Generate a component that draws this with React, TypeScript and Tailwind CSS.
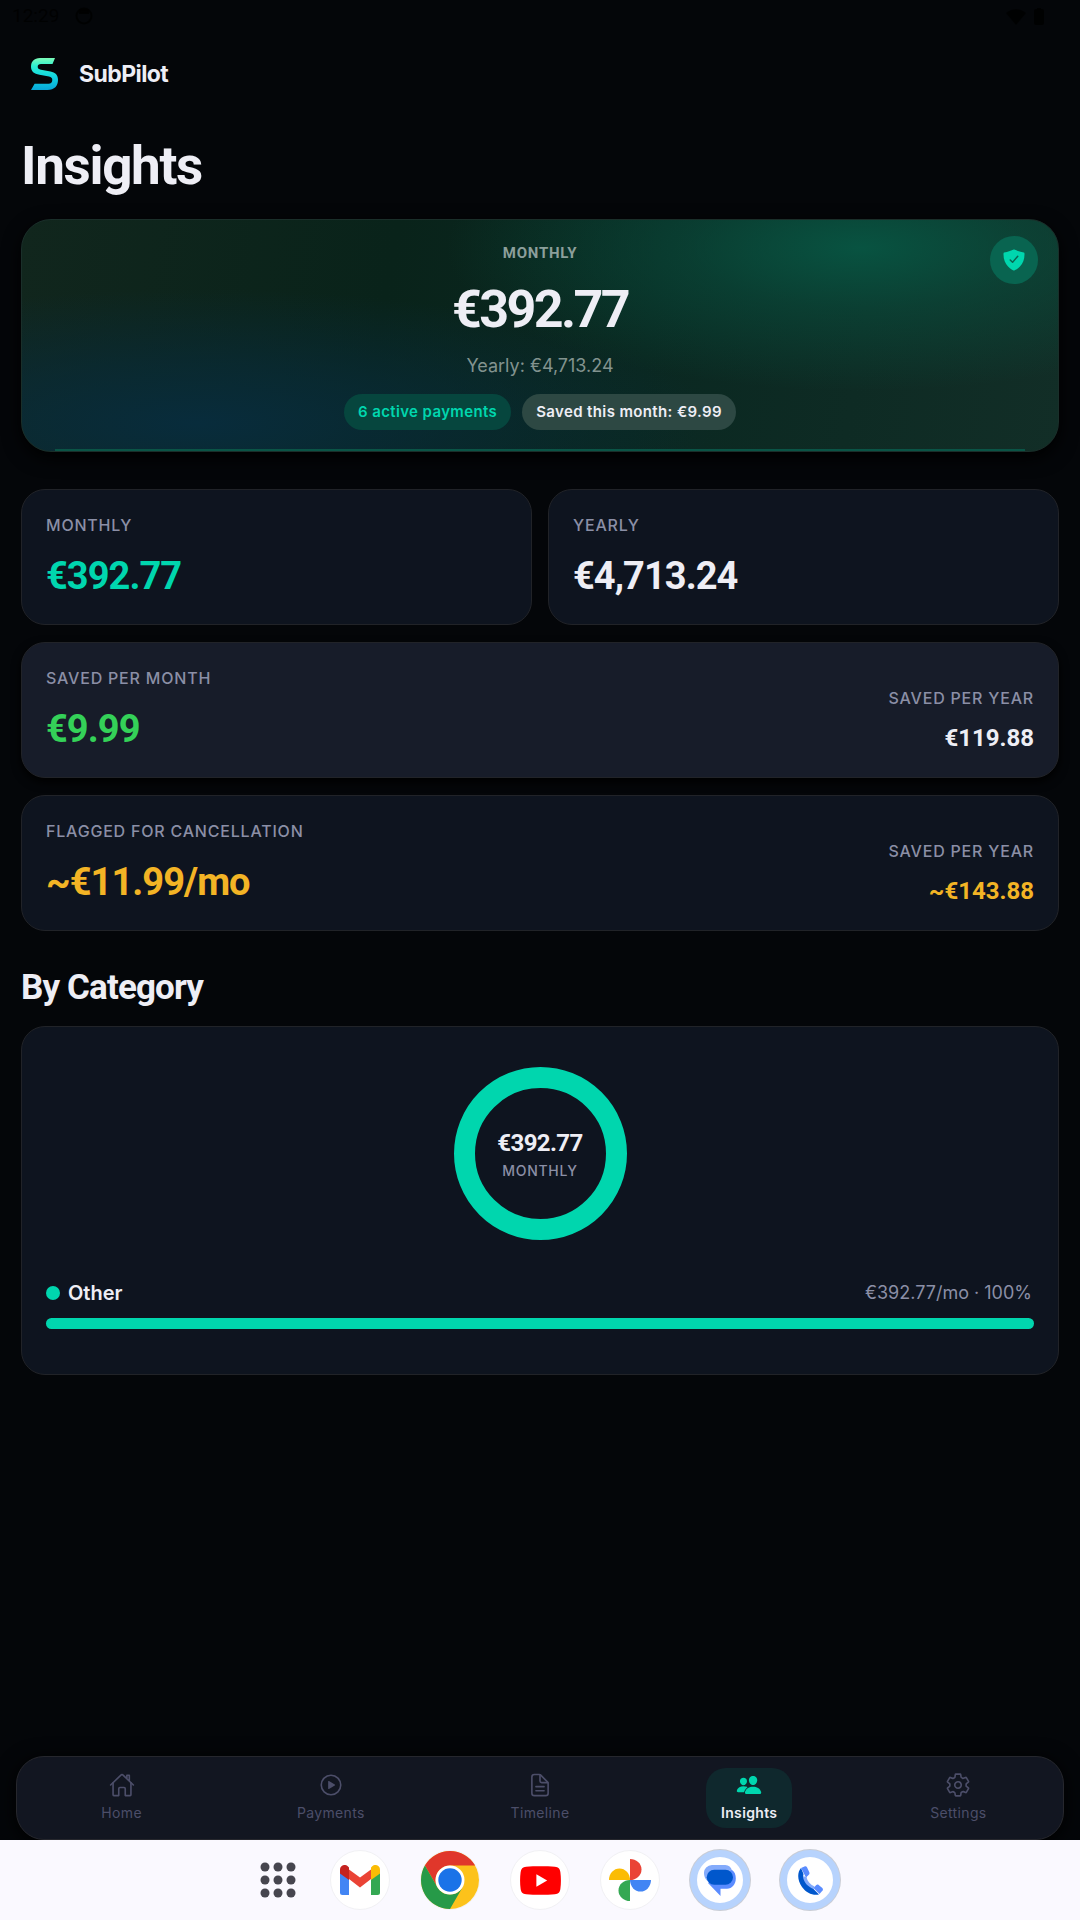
import type { ReactNode } from 'react'
import {
  IoDocumentTextOutline,
  IoHomeOutline,
  IoPeople,
  IoPlayCircleOutline,
  IoSettingsOutline,
  IoShieldCheckmark,
} from 'react-icons/io5'

const TABS = [
  { label: 'Home', Icon: IoHomeOutline },
  { label: 'Payments', Icon: IoPlayCircleOutline },
  { label: 'Timeline', Icon: IoDocumentTextOutline },
  { label: 'Insights', Icon: IoPeople },
  { label: 'Settings', Icon: IoSettingsOutline },
]

const CATEGORIES = [{ name: 'Other', amount: '€392.77/mo', percent: 100 }]

function StatusBar() {
  return (
    <div className="flex h-8 items-center justify-between pl-3 pr-9 text-black/80">
      <div className="flex items-center gap-4">
        <span className="font-['Roboto',sans-serif] text-[19px] leading-6">12:29</span>
        <svg viewBox="0 0 18 18" className="size-[18px]" fill="none" stroke="currentColor" strokeWidth="2">
          <circle cx="9" cy="9" r="7.5" />
          <path d="M5 3h8v3H5z" fill="currentColor" />
        </svg>
      </div>
      <div className="flex items-center gap-2">
        <svg viewBox="0 0 20 17" className="h-[17px] w-5" fill="currentColor">
          <path d="M10 17 0 5a15 15 0 0 1 20 0z" />
        </svg>
        <svg viewBox="0 0 10 17" className="h-[17px] w-[10px]" fill="currentColor">
          <rect y="1" width="10" height="16" rx="2" />
          <rect x="3" width="4" height="2" />
        </svg>
      </div>
    </div>
  )
}

function Logo() {
  return (
    <svg viewBox="0 0 27 32" className="h-8 w-[27px]" aria-hidden="true">
      <defs>
        <linearGradient id="logo" x1="0" y1="0" x2="0" y2="1">
          <stop offset="0" stopColor="#7dfbb8" />
          <stop offset="0.25" stopColor="#2df0d0" />
          <stop offset="0.6" stopColor="#10d3e2" />
          <stop offset="1" stopColor="#08a6d8" />
        </linearGradient>
      </defs>
      <path
        fill="url(#logo)"
        d="M24 0H9C3 0 0 3.600 0 8.500 0 13.600 3 15.800 8.500 16.800L18 18.600C20.200 19 21.300 20.100 21.300 22 21.300 24.300 20 25.800 17.500 25.800H3.600L0 32H16.500C23.500 32 27 28 27 21.800 27 16.800 24.200 14.600 19.500 13.600L10 11.700C7.800 11.300 6.700 10.600 6.700 8.800 6.700 6.900 7.800 6 10 6H21.500Z"
      />
    </svg>
  )
}

function Label({ children }: { children: ReactNode }) {
  return (
    <p className="text-[16px] font-medium uppercase leading-5 tracking-wider text-[#8b8fa6]">{children}</p>
  )
}

function Card({ className = '', children }: { className?: string; children: ReactNode }) {
  return (
    <section
      className={`rounded-[24px] border border-[#212328] px-6 pb-[26px] pt-[25px] ${className || 'bg-[#0e141f]'}`}
    >
      {children}
    </section>
  )
}

function Stat({ label, value, color }: { label: string; value: string; color: string }) {
  return (
    <div>
      <Label>{label}</Label>
      <p className={`mt-[19px] font-['Roboto',sans-serif] text-[38px] font-bold leading-[44px] tracking-tight ${color}`}>
        {value}
      </p>
    </div>
  )
}

function YearlySaving({ value, color }: { value: string; color: string }) {
  return (
    <div className="text-right">
      <Label>Saved per year</Label>
      <p className={`mt-[17px] font-['Roboto',sans-serif] text-[24px] font-bold leading-[26px] ${color}`}>{value}</p>
    </div>
  )
}

function Hero() {
  return (
    <section className="relative mt-[21px] flex flex-col items-center overflow-hidden rounded-[30px] border border-[#1a2f2a] bg-[radial-gradient(ellipse_40%_62%_at_81%_12%,#085341_0%,#08534180_42%,#08534100_100%),radial-gradient(ellipse_50%_58%_at_17%_88%,#082c3c_0%,#082c3c99_45%,#082c3c00_100%),linear-gradient(100deg,#11261d_0%,#09231a_35%,#0a2821_60%,#122e27_100%)] pb-[21px] pt-[23px] shadow-[0_6px_18px_#000]">
      <h2 className="font-['Roboto',sans-serif] text-[15px] font-bold uppercase leading-5 tracking-wider text-[#8c9f9b]">
        Monthly
      </h2>
      <p className="mt-[17px] font-['Roboto',sans-serif] text-[52px] font-bold leading-[60px] tracking-tighter text-[#eeeef5]">
        €392.77
      </p>
      <p className="mt-[14px] text-[18px] leading-6 text-[#82938f]">Yearly: €4,713.24</p>
      <div className="mt-4 flex gap-[11px] text-[15px] font-semibold leading-9 tracking-wide">
        <span className="rounded-full bg-[#06463e] px-[14px] text-[#00d6ae]">6 active payments</span>
        <span className="rounded-full bg-[#2d4843] px-[14px] text-[#eeeef5]">Saved this month: €9.99</span>
      </div>
      <span className="absolute right-5 top-4 flex size-12 items-center justify-center rounded-full bg-[#096450]">
        <IoShieldCheckmark className="size-6 text-[#00d6ae]" />
      </span>
      <span className="absolute inset-x-[33px] bottom-0 h-[2px] bg-[#0a5446]" />
    </section>
  )
}

function Categories() {
  return (
    <section className="mt-[18px] rounded-[24px] border border-[#212328] bg-[#0e141f] px-6 pb-[45px] pt-10">
      <div className="mx-auto flex size-[173px] flex-col items-center justify-center rounded-full border-[21px] border-[#00d6ae] pt-[2px]">
        <p className="font-['Roboto',sans-serif] text-[24px] font-bold leading-7 tracking-tight text-[#eeeef5]">
          €392.77
        </p>
        <p className="mt-1 text-[14px] font-medium uppercase leading-5 tracking-wider text-[#8b8fa6]">Monthly</p>
      </div>
      <ul className="mt-[41px]">
        {CATEGORIES.map((c) => (
          <li key={c.name}>
            <div className="flex items-center justify-between leading-6">
              <span className="flex items-center gap-2 text-[20px] font-semibold text-[#eeeef5]">
                <span className="size-[14px] rounded-full bg-[#00d6ae]" />
                {c.name}
              </span>
              <span className="pr-[2px] text-[18px] text-[#8b8fa6]">
                {c.amount} · {c.percent}%
              </span>
            </div>
            <div className="mt-[13px] h-[11px] rounded-full bg-[#171d2a]">
              <div className="h-full rounded-full bg-[#00d6ae]" style={{ width: `${c.percent}%` }} />
            </div>
          </li>
        ))}
      </ul>
    </section>
  )
}

function TabBar() {
  return (
    <nav className="mx-4 grid h-[84px] grid-cols-5 rounded-[28px] border border-[#26272d] bg-[#121621] shadow-[0_4px_20px_#000]">
      {TABS.map(({ label, Icon }) => {
        const active = label === 'Insights'
        return (
          <div key={label} className="flex justify-center pt-[11px]">
            <button
              type="button"
              aria-current={active ? 'page' : undefined}
              className={[
                'flex h-[60px] flex-col items-center rounded-[20px] px-[15px] pt-1 text-[14px] leading-5',
                active ? 'bg-[#0f282d] font-semibold text-[#eeeef5]' : 'text-[#4c4e69]',
              ].join(' ')}
            >
              <Icon className={active ? 'size-[26px] text-[#00d6ae]' : 'size-[26px]'} />
              <span className="mt-[5px] tracking-wide">{label}</span>
            </button>
          </div>
        )
      })}
    </nav>
  )
}

function DockIcon({ label, ringed, children }: { label: string; ringed?: boolean; children: ReactNode }) {
  return (
    <button
      type="button"
      aria-label={label}
      className={[
        'flex size-[60px] items-center justify-center rounded-full bg-white',
        ringed ? 'border-[7px] border-[#b7d3fd] ring-1 ring-[#c9cdd6]' : 'border border-[#f1f1f4]',
      ].join(' ')}
    >
      {children}
    </button>
  )
}

function Dock() {
  return (
    <div className="flex h-20 items-center justify-center gap-[30px] bg-[#faf9ff]">
      <button type="button" aria-label="All apps" className="flex size-[60px] items-center justify-center pl-4">
        <svg viewBox="0 0 36 36" className="size-9 shrink-0" fill="#46464f">
          {[5, 18, 31].map((y) => [5, 18, 31].map((x) => <circle key={`${x}-${y}`} cx={x} cy={y} r="4.5" />))}
        </svg>
      </button>
      <DockIcon label="Gmail">
        <svg viewBox="0 0 40 30" className="h-[30px] w-10 shrink-0">
          <path d="M0 8h9v22H2.500A2.500 2.500 0 0 1 0 27.500z" fill="#4285f4" />
          <path d="M31 8h9v19.500a2.500 2.500 0 0 1-2.500 2.500H31z" fill="#34a853" />
          <path d="M9 4.500 20 12.500 31 4.500V14L20 22.500 9 14z" fill="#ea4335" />
          <path d="M0 8.500V4.500C0 .6 4.500-1.400 7.500 1L9 2.500V15L0 8.500z" fill="#c5221f" />
          <path d="M40 8.500V4.500C40 .6 35.500-1.400 32.500 1L31 2.500V15l9-6.500z" fill="#fbbc04" />
        </svg>
      </DockIcon>
      <DockIcon label="Chrome">
        <svg viewBox="0 0 58 58" className="size-[58px] shrink-0">
          <circle cx="29" cy="29" r="29" fill="#fcc21b" />
          <path d="M3.900 14.500A29 29 0 0 1 54.100 14.500H29A14.500 14.500 0 0 0 16.400 36.200z" fill="#e0372b" />
          <path d="M3.900 14.500A29 29 0 0 0 29 58L41.600 36.200A14.500 14.500 0 0 1 16.400 36.200z" fill="#269a48" />
          <circle cx="29" cy="29" r="14.500" fill="#fff" />
          <circle cx="29" cy="29" r="11.700" fill="#1a73e8" />
        </svg>
      </DockIcon>
      <DockIcon label="YouTube">
        <svg viewBox="0 0 40 28" className="h-[29px] w-[41px] shrink-0">
          <path
            d="M6 .6C14 0 26 0 34 .6c3.500.3 5 2 5.400 5.400.7 5 .7 11 0 16-.4 3.500-1.900 5.100-5.400 5.400-8 .8-20 .8-28 0C2.500 27.100 1 25.500.6 22c-.7-5-.7-11 0-16C1 2.600 2.500.9 6 .6z"
            fill="#f00"
          />
          <path d="M16 8v12l10.500-6z" fill="#fff" />
        </svg>
      </DockIcon>
      <DockIcon label="Photos">
        <svg viewBox="0 0 42 42" className="size-[42px] shrink-0">
          <path d="M21 0a11.500 10.500 0 0 1 0 21z" fill="#ea4335" />
          <path d="M42 21a10.500 11.500 0 0 1-21 0z" fill="#4285f4" />
          <path d="M21 42a11.500 10.500 0 0 1 0-21z" fill="#34a853" />
          <path d="M0 21a10.500 11.500 0 0 1 21 0z" fill="#fbbc04" />
        </svg>
      </DockIcon>
      <DockIcon label="Messages" ringed>
        <svg viewBox="0 0 32 31" className="h-[31px] w-8 shrink-0">
          <path d="M8 0h12.500a7.500 7.500 0 0 1 7.500 5.500V14L6 19 3 15.500C1 13.500 0 11 0 8.500A8 8 0 0 1 8 0z" fill="#84abfb" />
          <path d="M28 5c2.500 1.500 3.800 4.500 3.800 8.500 0 6-3.800 10.200-8.800 10.200h-6.500V31L4 18z" fill="#5a8cff" />
          <rect x="2.700" y="4.700" width="26.300" height="15" rx="7.500" fill="#0057cc" />
        </svg>
      </DockIcon>
      <DockIcon label="Phone" ringed>
        <svg viewBox="0 0 25 29" className="h-[29px] w-[25px] shrink-0">
          <path d="M4 10 8.500 11c.8 4 3.500 7.500 8 9.500l-1.500 4C8 22 4 17 4 10z" fill="#84abfb" />
          <path
            d="M3 2C-1 6.500-.7 14.500 4 21c4.500 6.200 10.500 8.600 17 7.500l-5.500-5.500C9.500 20.500 6 16.500 5 11l.5-3z"
            fill="#0057cc"
          />
          <path d="M3 2 6.500.4C7.600 0 8.500.3 9 1.300l2.300 5c.4 1 .3 1.800-.5 2.500L8 11.500z" fill="#5a8cff" />
          <path d="m15.500 22 2.800-3c.8-.7 1.500-.7 2.400-.1l3.600 3c.8.8.8 1.700.3 2.500L21.500 28z" fill="#5a8cff" />
        </svg>
      </DockIcon>
    </div>
  )
}

export default function App() {
  return (
    <div className="flex min-h-screen flex-col bg-[#040609] font-['Inter',sans-serif]">
      <StatusBar />

      <main className="flex-1 px-[21px]">
        <header className="flex h-[84px] items-center gap-[21px] pl-[10px]">
          <Logo />
          <span className="text-[23px] font-bold leading-7 tracking-tight text-[#eeeef5]">SubPilot</span>
        </header>

        <h1 className="mt-[18px] font-['Roboto',sans-serif] text-[53px] font-bold leading-[64px] tracking-tight text-[#eeeef5]">
          Insights
        </h1>

        <Hero />

        {/* Totals */}
        <div className="mt-[37px] grid grid-cols-2 gap-x-4 gap-y-[17px]">
          <Card>
            <Stat label="Monthly" value="€392.77" color="text-[#00d6ae]" />
          </Card>
          <Card>
            <Stat label="Yearly" value="€4,713.24" color="text-[#eeeef5]" />
          </Card>
          <Card className="col-span-2 flex items-end justify-between bg-[#171c29] shadow-[0_4px_10px_#000]">
            <Stat label="Saved per month" value="€9.99" color="text-[#34d158]" />
            <YearlySaving value="€119.88" color="text-[#eeeef5]" />
          </Card>
          <Card className="col-span-2 flex items-end justify-between bg-[#0e141f]">
            <Stat label="Flagged for cancellation" value="~€11.99/mo" color="text-[#f3b425]" />
            <YearlySaving value="~€143.88" color="text-[#f3b425]" />
          </Card>
        </div>

        {/* Breakdown */}
        <h2 className="mt-[37px] font-['Roboto',sans-serif] text-[35px] font-bold leading-10 tracking-tight text-[#eeeef5]">
          By Category
        </h2>
        <Categories />
      </main>

      <TabBar />
      <Dock />
    </div>
  )
}
